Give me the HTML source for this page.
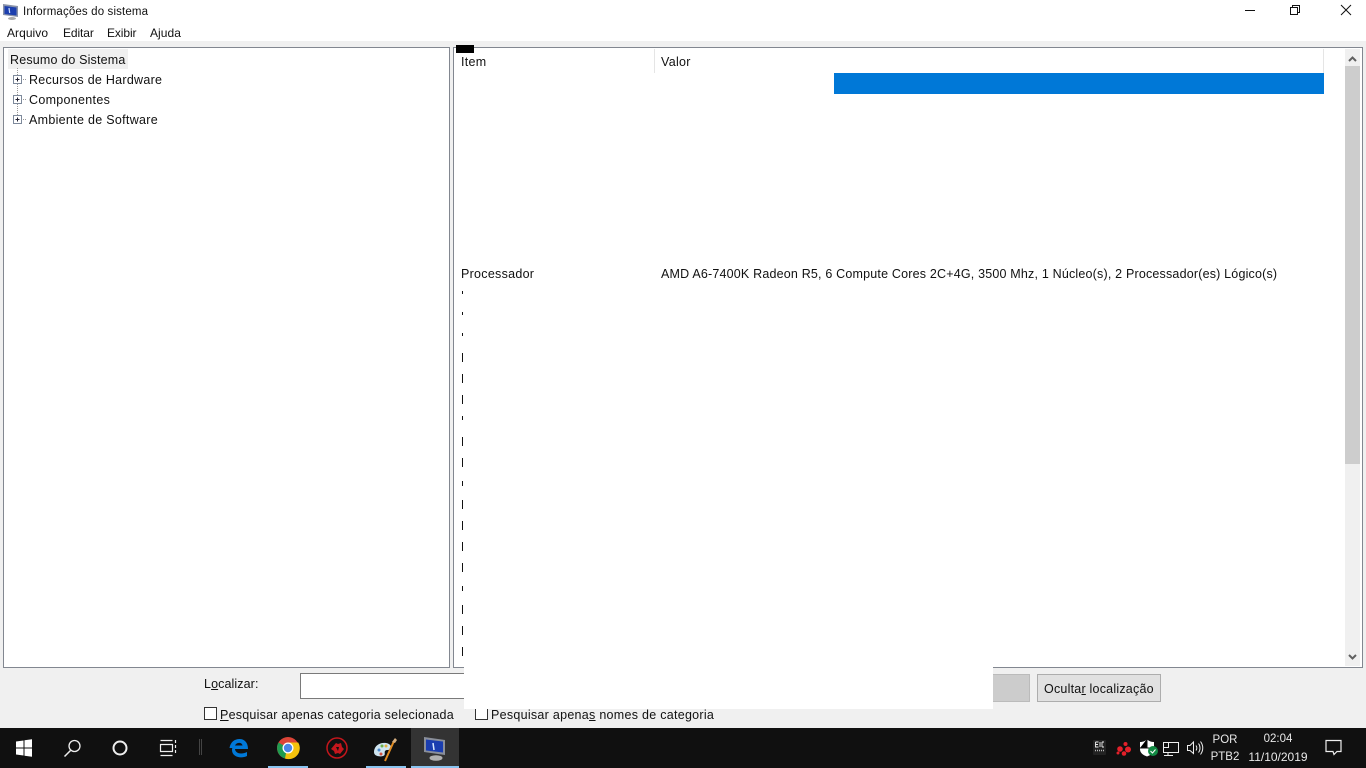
<!DOCTYPE html>
<html lang="pt"><head><meta charset="utf-8"><title>Informações do sistema</title>
<style>
html,body{margin:0;padding:0;width:1366px;height:768px;overflow:hidden;background:#f0f0f0}
body{position:relative;font-family:"Liberation Sans",sans-serif;font-size:12.5px;color:#111}
.a{position:absolute}
.t{position:absolute;white-space:nowrap;line-height:16px;letter-spacing:.3px}
.st{position:absolute;left:462px;width:1px;background:#111}
.tb{color:#e8e8e8;font-size:12px;letter-spacing:0;text-align:center}
u{text-underline-offset:1px}
svg{position:absolute;overflow:visible}
</style></head><body>
<div class="a" style="left:0;top:0;width:1366px;height:41px;background:#fff"></div>
<svg style="left:3px;top:4px" width="16" height="16" viewBox="0 0 16 16"><path d="M0 0l15 2v11l-15-2z" fill="#8a93a8"/><path d="M1.500 2l12 1.500v8l-12-1.500z" fill="#1c3fae"/><path d="M6 4l.7 5" stroke="#cfe0ff" stroke-width="1.200"/><ellipse cx="9" cy="14.500" rx="4" ry="1.500" fill="#aaa"/></svg>
<div class="t" style="left:23px;top:4px;font-size:11.5px;letter-spacing:.14px">Informações do sistema</div>
<div class="t" style="left:7px;top:25px;font-size:12px;letter-spacing:.05px">Arquivo</div>
<div class="t" style="left:63px;top:25px;font-size:12px;letter-spacing:-.1px">Editar</div>
<div class="t" style="left:107px;top:25px;font-size:12px;letter-spacing:-.1px">Exibir</div>
<div class="t" style="left:150px;top:25px;font-size:12px;letter-spacing:.05px">Ajuda</div>
<svg style="left:1245px;top:5px" width="110" height="12"><path d="M0 5.500h10" stroke="#111"/><path d="M45.500 2.500h7v7h-7zM47.500 2.500v-2h7v7h-2" fill="none" stroke="#111"/><path d="M96 0l10 10M106 0l-10 10" stroke="#111" fill="none"/></svg>

<div class="a" style="left:3px;top:47px;width:445px;height:619px;background:#fff;border:1px solid #828790"></div>
<div class="a" style="left:8px;top:49px;width:120px;height:20px;background:#f0f0f0"></div>
<div class="t" style="left:10px;top:52px;letter-spacing:.17px">Resumo do Sistema</div>
<svg style="left:12px;top:68px" width="24" height="58"><path d="M5.500 0v47M9 11.500h6M9 31.500h6M9 51.500h6" stroke="#999" stroke-dasharray="1 1" fill="none"/><g fill="#fff" stroke="#7e8a9c"><rect x="1.500" y="7.500" width="8" height="8"/><rect x="1.500" y="27.500" width="8" height="8"/><rect x="1.500" y="47.500" width="8" height="8"/></g><path d="M3.500 11.500h4M5.500 9.500v4M3.500 31.500h4M5.500 29.500v4M3.500 51.500h4M5.500 49.500v4" stroke="#223"/></svg>
<div class="t" style="left:29px;top:72px;letter-spacing:.27px">Recursos de Hardware</div>
<div class="t" style="left:29px;top:92px">Componentes</div>
<div class="t" style="left:29px;top:112px">Ambiente de Software</div>

<div class="a" style="left:453px;top:47px;width:908px;height:619px;background:#fff;border:1px solid #828790"></div>
<div class="a" style="left:456px;top:45px;width:18px;height:8px;background:#000"></div>
<div class="t" style="left:461px;top:54px">Item</div>
<div class="a" style="left:654px;top:49px;width:1px;height:24px;background:#e5e5e5"></div>
<div class="t" style="left:661px;top:54px">Valor</div>
<div class="a" style="left:1323px;top:49px;width:1px;height:24px;background:#e5e5e5"></div>
<div class="a" style="left:834px;top:73px;width:490px;height:21px;background:#0078d7"></div>
<div class="a" style="left:1345px;top:49px;width:15px;height:617px;background:#f0f0f0"></div>
<div class="a" style="left:1345px;top:66px;width:15px;height:398px;background:#cdcdcd"></div>
<svg style="left:1345px;top:49px" width="15" height="617"><path d="M4 12l3.500-3.500 3.500 3.500M4 606l3.500 3.500 3.500-3.500" fill="none" stroke="#606060" stroke-width="2"/></svg>
<div class="t" style="left:461px;top:266px;letter-spacing:.28px">Processador</div>
<div class="t" style="left:661px;top:266px;letter-spacing:.19px">AMD A6-7400K Radeon R5, 6 Compute Cores 2C+4G, 3500 Mhz, 1 Núcleo(s), 2 Processador(es) Lógico(s)</div>
<div class="st" style="top:291px;height:3px"></div><div class="st" style="top:312px;height:3px"></div><div class="st" style="top:333px;height:3px"></div>
<div class="st" style="top:353px;height:9px"></div><div class="st" style="top:374px;height:9px"></div><div class="st" style="top:395px;height:9px"></div>
<div class="st" style="top:416px;height:4px"></div>
<div class="st" style="top:437px;height:9px"></div><div class="st" style="top:458px;height:9px"></div>
<div class="st" style="top:481px;height:5px"></div>
<div class="st" style="top:500px;height:9px"></div><div class="st" style="top:521px;height:9px"></div><div class="st" style="top:542px;height:9px"></div><div class="st" style="top:563px;height:9px"></div>
<div class="st" style="top:586px;height:5px"></div>
<div class="st" style="top:605px;height:9px"></div><div class="st" style="top:626px;height:9px"></div><div class="st" style="top:647px;height:9px"></div>

<div class="t" style="left:204px;top:676px;letter-spacing:.1px">L<u>o</u>calizar:</div>
<div class="a" style="left:300px;top:673px;width:170px;height:24px;background:#fff;border:1px solid #7a7a7a"></div>
<div class="a" style="left:990px;top:674px;width:38px;height:26px;background:#ccc;border:1px solid #bbb"></div>
<div class="a" style="left:1037px;top:674px;width:122px;height:26px;background:#e1e1e1;border:1px solid #adadad"></div>
<div class="t" style="left:1044px;top:681px;letter-spacing:.22px">Oculta<u>r</u> localização</div>
<div class="a" style="left:204px;top:707px;width:11px;height:11px;border:1px solid #333;background:#fff"></div>
<div class="t" style="left:220px;top:707px;letter-spacing:.23px"><u>P</u>esquisar apenas categoria selecionada</div>
<div class="a" style="left:475px;top:707px;width:11px;height:11px;border:1px solid #333;background:#fff"></div>
<div class="t" style="left:491px;top:707px;letter-spacing:.28px">Pesquisar apena<u>s</u> nomes de categoria</div>
<div class="a" style="left:464px;top:284px;width:529px;height:425px;background:#fff"></div>

<div class="a" style="left:0;top:728px;width:1366px;height:40px;background:#101010"></div>
<div class="a" style="left:411px;top:728px;width:48px;height:40px;background:#333"></div>
<div class="a" style="left:268px;top:766px;width:40px;height:2px;background:#8ac4f0"></div>
<div class="a" style="left:366px;top:766px;width:40px;height:2px;background:#8ac4f0"></div>
<div class="a" style="left:411px;top:766px;width:48px;height:2px;background:#8ac4f0"></div>
<svg style="left:0;top:728px" width="470" height="40">
<path d="M16 13.500l7.500-1v7h-7.500zM24.500 12.300l7.500-1.100v8.300h-7.500zM16 20.500h7.500v7l-7.500-1zM24.500 20.500h7.500v8.300l-7.500-1.100z" fill="#fff"/>
<circle cx="74.500" cy="18" r="5.500" fill="none" stroke="#eee" stroke-width="1.300"/><path d="M70.500 22.500l-6 6" stroke="#eee" stroke-width="1.500"/>
<circle cx="120" cy="20" r="6.500" fill="none" stroke="#eee" stroke-width="2"/>
<path d="M160.500 16.500h12v7h-12zM160.500 12.500h12M160.500 27.500h12M175.500 12v3M175.500 17v3M175.500 22v3" fill="none" stroke="#eee" stroke-width="1.200"/>
<path d="M199.500 11v16M201.500 11v16" stroke="#444"/>
<path d="M229.500 20c1-6 5-9 10-9 5 0 8.500 3.500 8.500 10h-13c.5 5 7 5.500 12 3v4c-6 3-15 1-15-6 0-1 0-1.500.500-2z M235 17.500h7.500c-.5-3.500-6-3.500-7.500 0z" fill="#0078d7" fill-rule="evenodd"/>
<circle cx="288" cy="20" r="11" fill="#dc4437"/><path d="M288 20l-9.500-5.500a11 11 0 0 0 6.500 16z" fill="#1f9b50"/><path d="M288 14.500h10.200a11 11 0 0 1-13.200 16z" fill="#f4c20d"/><circle cx="288" cy="20" r="5.500" fill="#fff"/><circle cx="288" cy="20" r="4.200" fill="#4a86e8"/>
<circle cx="337" cy="20" r="10" fill="none" stroke="#c4161c" stroke-width="1.500"/><path d="M331 21l5-6 2 1 3-1 1 4 2 2-4 5-2-1-3 1-1-3z" fill="#c4161c"/><path d="M336 19l3 0-1 4z" fill="#101010"/>
<path d="M374 24c0-6 6-10 12-9 5 1 6 4 4 6-2 2-3 0-5 2-1 2 1 4-2 5-4 1-9 0-9-4z" fill="#cfe4f0"/><circle cx="379" cy="22" r="1.500" fill="#4a8ad0"/><circle cx="382" cy="18" r="1.500" fill="#6cb04a"/><circle cx="386" cy="18" r="1.500" fill="#e0b040"/><circle cx="381" cy="26" r="1.500" fill="#d05040"/><path d="M385 33l9-20" stroke="#e08a20" stroke-width="2"/><path d="M392 14l3-4 2 2-2 3z" fill="#d8b080"/>
<path d="M424 9l21 3v15l-21-3z" fill="#8a8f9a"/><path d="M426 11.500l17 2v11l-17-2z" fill="#1a3db0"/><path d="M433 15l1 7" stroke="#d8e8ff" stroke-width="1.500"/><ellipse cx="436" cy="30" rx="6.500" ry="2.800" fill="#b0b0b0"/>
</svg>
<svg style="left:1090px;top:728px" width="250" height="40">
<rect x="3" y="12" width="13" height="15" rx="1" fill="#222"/><path d="M5.500 14h3M5.500 14v5h3M5.500 16.500h2.500M10 14v5M12 14h2M12 19h2M12 14v5" stroke="#eee" fill="none" stroke-width=".9"/><path d="M5 22.500h9" stroke="#bbb" stroke-width="1.500" stroke-dasharray="1 1"/>
<g fill="#e3202a"><circle cx="30" cy="21" r="2.800"/><circle cx="35.500" cy="16" r="2"/><circle cx="38" cy="21.500" r="3"/><circle cx="34" cy="25.500" r="2.300"/><circle cx="28" cy="25" r="1.500"/></g>
<path d="M50 14c3 0 5-1 7-2.500 2 1.500 4 2.500 7 2.500v7c0 4-3 6-7 7.500-4-1.500-7-3.500-7-7.500z" fill="#fff"/><path d="M57 11v9h-7M57 20h7" stroke="#101010"/><circle cx="63" cy="23" r="5" fill="#128a43"/><path d="M60.500 23l2 2 3-3.500" stroke="#fff" fill="none"/>
<path d="M73.500 14.500h15v10h-15zM78 24.500v3.500M74 27.500h9" fill="none" stroke="#eee"/><rect x="73.500" y="14.500" width="5" height="5" fill="#101010" stroke="#eee"/>
<path d="M100 17.500h-2.500v5h2.500l3.500 3v-11.500zM106 17.500c1 1.500 1 3.500 0 5M108.500 15.500c2 2.500 2 6.500 0 9M110.500 13.500c3 4 3 9 0 13" fill="none" stroke="#eee"/>
<path d="M236 12.500h15v11h-4l-3 3-1-3h-7z" fill="none" stroke="#eee" stroke-width="1.200"/>
</svg>
<div class="t tb" style="left:1205px;top:732px;width:40px;font-size:11.500px">POR</div>
<div class="t tb" style="left:1205px;top:749px;width:40px;font-size:11.500px">PTB2</div>
<div class="t tb" style="left:1248px;top:731px;width:60px;font-size:11.500px">02:04</div>
<div class="t tb" style="left:1248px;top:749px;width:60px">11/10/2019</div>
</body></html>
